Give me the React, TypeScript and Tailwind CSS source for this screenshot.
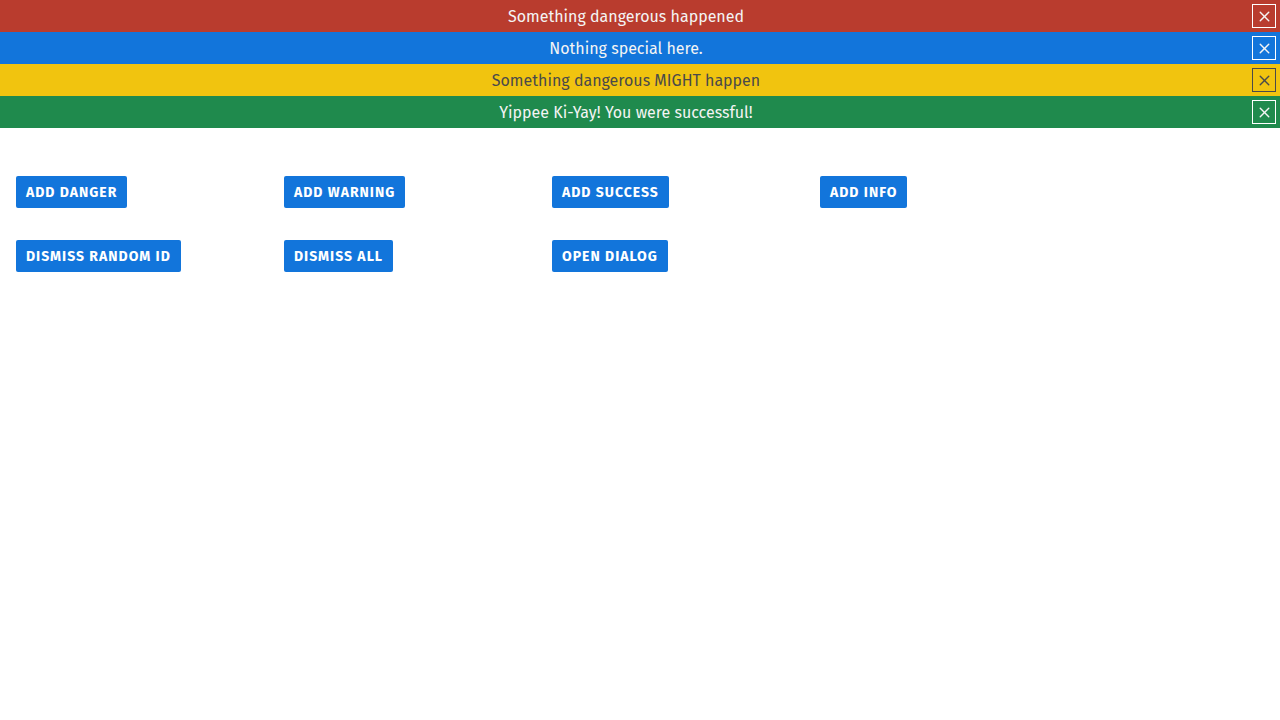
import { X } from 'lucide-react';

type Alert = { id: number; text: string; bg: string; fg: string; border: string };

const ALERTS: Alert[] = [
  { id: 1, text: 'Something dangerous happened', bg: 'bg-[#b93c2e]', fg: 'text-[#f4f4f4]', border: 'border-white' },
  { id: 2, text: 'Nothing special here.', bg: 'bg-[#1275db]', fg: 'text-[#f4f4f4]', border: 'border-white' },
  { id: 3, text: 'Something dangerous MIGHT happen', bg: 'bg-[#f1c40f]', fg: 'text-[#4a4a4a]', border: 'border-[#4a4a4a]' },
  { id: 4, text: 'Yippee Ki-Yay! You were successful!', bg: 'bg-[#1f8a4d]', fg: 'text-[#f4f4f4]', border: 'border-white' },
];

const BUTTONS = [
  ['Add danger', 'Add warning', 'Add success', 'Add info'],
  ['Dismiss random id', 'Dismiss all', 'Open dialog'],
];

export default function App() {
  return (
    <div className="min-h-[720px] bg-white font-['Fira_Sans','Open_Sans',sans-serif]">
      <div>
        {ALERTS.map((a) => (
          <div key={a.id} className={`flex h-8 items-center ${a.bg} ${a.fg}`}>
            <span className="flex-1 pt-[2px] text-center text-base">{a.text}</span>
            <button className={`mr-1 flex h-6 w-6 items-center justify-center border ${a.border}`}>
              <X size={17} strokeWidth={2} />
            </button>
          </div>
        ))}
      </div>
      <div className="flex flex-col gap-8 px-4 pt-12">
        {BUTTONS.map((row, i) => (
          <div key={i} className="grid grid-cols-[repeat(4,268px)]">
            {row.map((b) => (
              <div key={b}>
                <button className="h-8 rounded-[2px] bg-[#1275db] px-[10px] pt-[2px] text-sm font-bold uppercase tracking-[1px] text-white">
                  {b}
                </button>
              </div>
            ))}
          </div>
        ))}
      </div>
    </div>
  );
}
